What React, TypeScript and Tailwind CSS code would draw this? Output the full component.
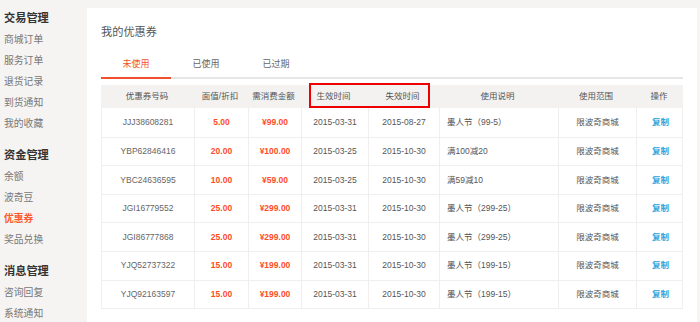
import React from "react";

const rows = [
  ["JJJ38608281", "5.00", "¥99.00", "2015-03-31", "2015-08-27", "墨人节（99-5）"],
  ["YBP62846416", "20.00", "¥100.00", "2015-03-25", "2015-10-30", "满100减20"],
  ["YBC24636595", "10.00", "¥59.00", "2015-03-25", "2015-10-30", "满59减10"],
  ["JGI16779552", "25.00", "¥299.00", "2015-03-31", "2015-10-30", "墨人节（299-25）"],
  ["JGI86777868", "25.00", "¥299.00", "2015-03-31", "2015-10-30", "墨人节（299-25）"],
  ["YJQ52737322", "15.00", "¥199.00", "2015-03-31", "2015-10-30", "墨人节（199-15）"],
  ["YJQ92163597", "15.00", "¥199.00", "2015-03-31", "2015-10-30", "墨人节（199-15）"],
];

const sections = [
  { title: "交易管理", items: ["商城订单", "服务订单", "退货记录", "到货通知", "我的收藏"] },
  { title: "资金管理", items: ["余额", "波奇豆", "优惠券", "奖品兑换"] },
  { title: "消息管理", items: ["咨询回复", "系统通知"] },
];

const headers = ["优惠券号码", "面值/折扣", "需消费金额", "生效时间", "失效时间", "使用说明", "使用范围", "操作"];

const grid = "grid grid-cols-[92px_54px_53px_67px_71px_119px_78px_48px]";

export default function App() {
  return (
    <div
      className="flex w-[700px] h-[322px] overflow-hidden bg-[#f5f4f2] text-[#555]"
      style={{ fontFamily: '"Liberation Sans", "Noto Sans CJK SC", sans-serif' }}
    >
      <aside className="w-[87px] shrink-0 pl-[4px] pt-[6px]">
        {sections.map((s) => (
          <div key={s.title} className="mb-[8px]">
            <div className="h-[24px] flex items-center text-[11.2px] font-bold text-[#333]">{s.title}</div>
            {s.items.map((it) => (
              <div
                key={it}
                className={
                  "h-[21px] flex items-center text-[9.8px] " +
                  (it === "优惠券" ? "text-[#ff5a2e] font-bold" : "text-[#777]")
                }
              >
                {it}
              </div>
            ))}
          </div>
        ))}
      </aside>
      <main className="mt-[8px] w-[610px] shrink-0 bg-white px-[14px]">
        <div className="pt-[17px] h-[31px] text-[11.2px] leading-[14px] text-[#555]">我的优惠券</div>
        <div className="mt-[9px] flex border-b-2 border-[#e6e6e6]">
          {["未使用", "已使用", "已过期"].map((t, i) => (
            <div
              key={t}
              className={
                "w-[70px] h-[31px] -mb-[2px] flex items-center justify-center text-[9px] " +
                (i === 0 ? "text-[#f0502d] border-b-2 border-[#f0502d]" : "text-[#666] border-b-2 border-transparent")
              }
            >
              <span className="pt-[4px]">{t}</span>
            </div>
          ))}
        </div>
        <div className="relative mt-[6px] w-[582px]">
          <div className={grid + " h-[23px] bg-[#f3f2f0] text-[8.5px] text-[#555]"}>
            {headers.map((h) => (
              <div key={h} className="flex items-center justify-center">
                {h}
              </div>
            ))}
          </div>
          <div className="border-x border-b border-[#f0efed]">
            {rows.map((r, idx) => (
              <div
                key={idx}
                className={grid + " h-[28.6px] text-[8.5px] " + (idx > 0 ? "border-t border-[#f0efed]" : "")}
              >
                <div className="flex items-center justify-center text-[#666]">{r[0]}</div>
                <div className="flex items-center justify-center border-l border-[#f0efed] font-bold text-[#ff4d1f]">{r[1]}</div>
                <div className="flex items-center justify-center border-l border-[#f0efed] font-bold text-[#ff4d1f]">{r[2]}</div>
                <div className="flex items-center justify-center border-l border-[#f0efed] text-[#555]">{r[3]}</div>
                <div className="flex items-center justify-center border-l border-[#f0efed] text-[#555]">{r[4]}</div>
                <div className="flex items-center justify-start pl-[7px] border-l border-[#f0efed] text-[#555]">{r[5]}</div>
                <div className="flex items-center justify-center border-l border-[#f0efed] text-[#555]">限波奇商城</div>
                <div className="flex items-center justify-center border-l border-[#f0efed] font-bold text-[#2fa6dc]">复制</div>
              </div>
            ))}
          </div>
          <div className="absolute left-[208px] top-[-2px] w-[121px] h-[25px] border-2 border-[#ee0000]" />
        </div>
      </main>
    </div>
  );
}
